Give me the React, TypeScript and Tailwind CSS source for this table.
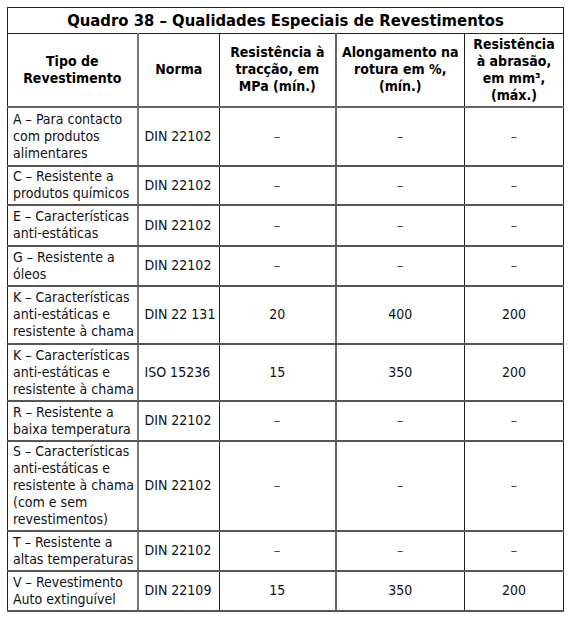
const rows: { tipo: string[]; norma: string; a: string; b: string; c: string; h: number }[] = [
  { tipo: ['A – Para contacto', 'com produtos', 'alimentares'], norma: 'DIN 22102', a: '–', b: '–', c: '–', h: 59 },
  { tipo: ['C – Resistente a', 'produtos químicos'], norma: 'DIN 22102', a: '–', b: '–', c: '–', h: 39 },
  { tipo: ['E – Características', 'anti-estáticas'], norma: 'DIN 22102', a: '–', b: '–', c: '–', h: 41 },
  { tipo: ['G – Resistente a', 'óleos'], norma: 'DIN 22102', a: '–', b: '–', c: '–', h: 40 },
  { tipo: ['K – Características', 'anti-estáticas e', 'resistente à chama'], norma: 'DIN 22 131', a: '20', b: '400', c: '200', h: 58 },
  { tipo: ['K – Características', 'anti-estáticas e', 'resistente à chama'], norma: 'ISO 15236', a: '15', b: '350', c: '200', h: 57 },
  { tipo: ['R – Resistente a', 'baixa temperatura'], norma: 'DIN 22102', a: '–', b: '–', c: '–', h: 40 },
  { tipo: ['S – Características', 'anti-estáticas e', 'resistente à chama', '(com e sem', 'revestimentos)'], norma: 'DIN 22102', a: '–', b: '–', c: '–', h: 90 },
  { tipo: ['T – Resistente a', 'altas temperaturas'], norma: 'DIN 22102', a: '–', b: '–', c: '–', h: 40 },
  { tipo: ['V – Revestimento', 'Auto extinguível'], norma: 'DIN 22109', a: '15', b: '350', c: '200', h: 40 },
];

function Lines({ items }: { items: string[] }) {
  return (
    <>
      {items.map((t, i) => (
        <div key={i} className="whitespace-nowrap">{t}</div>
      ))}
    </>
  );
}

export default function App() {
  return (
    <div className="w-[570px] h-[619px] bg-white pt-[7px] pl-[7px] font-['DejaVu_Sans_Condensed','DejaVu_Sans',sans-serif] text-[14px] leading-[17px] text-[#111]">
      <table className="border-collapse table-fixed w-[556px]">
        <colgroup>
          <col className="w-[130px]" />
          <col className="w-[82px]" />
          <col className="w-[116px]" />
          <col className="w-[129px]" />
          <col className="w-[99px]" />
        </colgroup>
        <thead>
          <tr className="h-[26px]">
            <th colSpan={5} className="border border-[#222] text-center text-[16.5px] font-bold text-black align-middle">
              Quadro 38 – Qualidades Especiais de Revestimentos
            </th>
          </tr>
          <tr className="h-[73px] font-bold text-black">
            <th className="border-l border-l-[#222] border-r-2 border-r-[#777] border-b-2 border-b-[#666] text-center align-middle">
              <Lines items={['Tipo de', 'Revestimento']} />
            </th>
            <th className="border-r border-r-[#222] border-b-2 border-b-[#666] text-center align-middle">Norma</th>
            <th className="border-r-2 border-r-[#666] border-b-2 border-b-[#666] text-center align-middle">
              <Lines items={['Resistência à', 'tracção, em', 'MPa (mín.)']} />
            </th>
            <th className="border-r border-r-[#222] border-b-2 border-b-[#666] text-center align-middle">
              <Lines items={['Alongamento na', 'rotura em %,', '(mín.)']} />
            </th>
            <th className="border-r border-r-[#222] border-b-2 border-b-[#666] text-center align-middle">
              <Lines items={['Resistência', 'à abrasão,', 'em mm³,', '(máx.)']} />
            </th>
          </tr>
        </thead>
        <tbody>
          {rows.map((r, i) => (
            <tr key={i} style={{ height: r.h }}>
              <td className="border-l border-l-[#222] border-r-2 border-r-[#777] border-b-2 border-b-[#555] px-[5px] align-middle text-left">
                <Lines items={r.tipo} />
              </td>
              <td className="border-r border-r-[#222] border-b-2 border-b-[#555] pl-[6px] align-middle whitespace-nowrap">{r.norma}</td>
              <td className={`border-r-2 border-r-[#666] border-b-2 border-b-[#555] text-center align-middle ${r.a === '–' ? 'text-[#444]' : ''}`}>{r.a}</td>
              <td className={`border-r border-r-[#222] border-b-2 border-b-[#555] text-center align-middle ${r.b === '–' ? 'text-[#444]' : ''}`}>{r.b}</td>
              <td className={`border-r border-r-[#222] border-b-2 border-b-[#555] text-center align-middle ${r.c === '–' ? 'text-[#444]' : ''}`}>{r.c}</td>
            </tr>
          ))}
        </tbody>
      </table>
    </div>
  );
}
